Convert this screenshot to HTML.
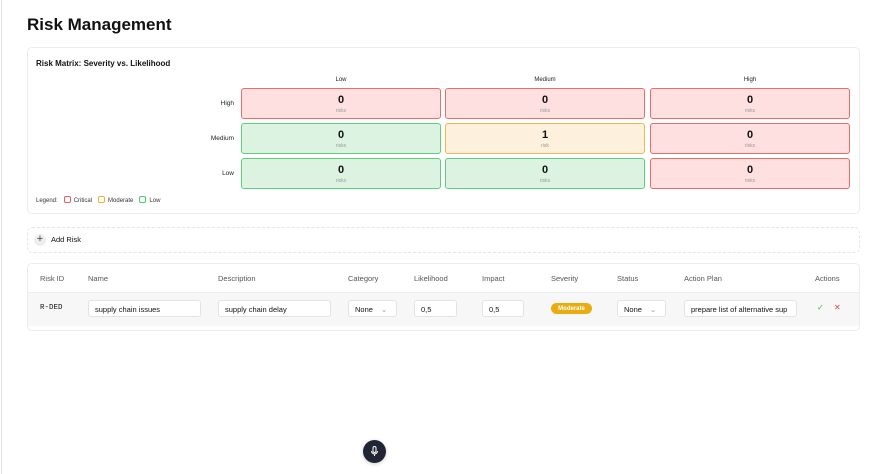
<!DOCTYPE html>
<html><head><meta charset="utf-8"><style>
*{box-sizing:border-box;margin:0;padding:0}
body{width:892px;height:474px;background:#fff;font-family:"Liberation Sans",sans-serif;color:#111;position:relative;overflow:hidden}
.abs{position:absolute}
.vl{left:1px;top:0;width:1px;height:474px;background:#ddd}
h1{position:absolute;left:27px;top:15px;font-size:17px;font-weight:bold}
.card{position:absolute;border:1px solid #ececec;border-radius:5px;background:#fff}
.t{font-size:8px;color:#222}
.cell{position:absolute;border:1.5px solid;border-radius:3px;text-align:center}
.cell b{display:block;font-size:11px;margin-top:5px}
.cell span{display:block;font-size:5px;color:#999;margin-top:2px}
.r{border-color:#ef6b6b;background:#fde0df}
.g{border-color:#5ccf7a;background:#dcf3e2}
.y{border-color:#f0b848;background:#fdf0dc}
.inp{position:absolute;top:300px;height:17px;border:1px solid #e3e3e3;border-radius:3px;background:#fff;font-size:7.5px;padding:4px 6px;white-space:nowrap;overflow:hidden}
.hd{position:absolute;top:274px;font-size:7.5px;color:#555}
.sw{display:inline-block;width:7px;height:7px;border:1.3px solid;border-radius:2px;vertical-align:-1px;margin:0 3px 0 6px}
</style></head><body>
<div class="abs vl"></div>
<h1>Risk Management</h1>
<div class="card" style="left:27px;top:47px;width:833px;height:167px"></div>
<div class="abs" style="left:36px;top:59px;font-size:8px;font-weight:bold">Risk Matrix: Severity vs. Likelihood</div>
<div class="abs t" style="left:241px;width:200px;top:77px;text-align:center;font-size:6px">Low</div>
<div class="abs t" style="left:445px;width:200px;top:77px;text-align:center;font-size:6px">Medium</div>
<div class="abs t" style="left:650px;width:200px;top:77px;text-align:center;font-size:6px">High</div>
<div class="abs t" style="left:180px;width:54px;top:100px;text-align:right;font-size:6.5px">High</div>
<div class="abs t" style="left:180px;width:54px;top:135px;text-align:right;font-size:6.5px">Medium</div>
<div class="abs t" style="left:180px;width:54px;top:170px;text-align:right;font-size:6.5px">Low</div>
<div class="cell r" style="left:241px;top:88px;width:200px;height:31px"><b>0</b><span>risks</span></div>
<div class="cell r" style="left:445px;top:88px;width:200px;height:31px"><b>0</b><span>risks</span></div>
<div class="cell r" style="left:650px;top:88px;width:200px;height:31px"><b>0</b><span>risks</span></div>
<div class="cell g" style="left:241px;top:123px;width:200px;height:31px"><b>0</b><span>risks</span></div>
<div class="cell y" style="left:445px;top:123px;width:200px;height:31px"><b>1</b><span>risk</span></div>
<div class="cell r" style="left:650px;top:123px;width:200px;height:31px"><b>0</b><span>risks</span></div>
<div class="cell g" style="left:241px;top:158px;width:200px;height:31px"><b>0</b><span>risks</span></div>
<div class="cell g" style="left:445px;top:158px;width:200px;height:31px"><b>0</b><span>risks</span></div>
<div class="cell r" style="left:650px;top:158px;width:200px;height:31px"><b>0</b><span>risks</span></div>
<div class="abs" style="left:36px;top:196px;font-size:6px;color:#333">Legend:<span class="sw" style="border-color:#ef5b5b"></span>Critical<span class="sw" style="border-color:#f0b030"></span>Moderate<span class="sw" style="border-color:#4cc870"></span>Low</div>
<div class="card" style="left:27px;top:227px;width:833px;height:26px;border:1px dashed #e5e5e5"></div>
<div class="abs" style="left:34px;top:234px;width:12px;height:12px;border-radius:50%;background:#eee;font-size:11px;line-height:11px;text-align:center;color:#444">+</div>
<div class="abs" style="left:51px;top:235px;font-size:7.5px">Add Risk</div>
<div class="card" style="left:27px;top:263px;width:833px;height:68px"></div>
<div class="abs" style="left:28px;top:292px;width:831px;height:34px;background:#f7f7f7;border-top:1px solid #eee"></div>
<div class="hd" style="left:40px">Risk ID</div><div class="hd" style="left:88px">Name</div><div class="hd" style="left:218px">Description</div><div class="hd" style="left:348px">Category</div><div class="hd" style="left:414px">Likelihood</div><div class="hd" style="left:482px">Impact</div><div class="hd" style="left:551px">Severity</div><div class="hd" style="left:617px">Status</div><div class="hd" style="left:684px">Action Plan</div><div class="hd" style="left:815px">Actions</div>
<div class="abs" style="left:40px;top:304px;font-size:7.5px;font-family:'Liberation Mono',monospace">R-DED</div>
<div class="inp" style="left:88px;width:113px">supply chain issues</div>
<div class="inp" style="left:218px;width:113px">supply chain delay</div>
<div class="inp" style="left:348px;width:49px">None <span style="color:#999;margin-left:6px">⌄</span></div>
<div class="inp" style="left:414px;width:43px">0,5</div>
<div class="inp" style="left:482px;width:42px">0,5</div>
<div class="abs" style="left:551px;top:303px;width:41px;height:11px;border-radius:6px;background:#e9ad12;color:#fff;font-size:6px;font-weight:bold;text-align:center;line-height:12px">Moderate</div>
<div class="inp" style="left:617px;width:49px">None <span style="color:#999;margin-left:6px">⌄</span></div>
<div class="inp" style="left:684px;width:113px">prepare list of alternative sup</div>
<div class="abs" style="left:817px;top:303px;font-size:8px;color:#3cb95c">✓</div>
<div class="abs" style="left:834px;top:303px;font-size:8px;color:#e04545">✕</div>
<div class="abs" style="left:363px;top:440px;width:23px;height:23px;border-radius:50%;background:#1f2532;box-shadow:0 1px 4px rgba(0,0,0,.2)">
<svg width="23" height="23" viewBox="0 0 23 23"><rect x="10" y="6.5" width="3" height="6" rx="1.5" fill="none" stroke="#fff" stroke-width="1"/><path d="M8.5 11a3 3 0 0 0 6 0M11.5 14v2" fill="none" stroke="#fff" stroke-width="1"/></svg></div>
</body></html>
